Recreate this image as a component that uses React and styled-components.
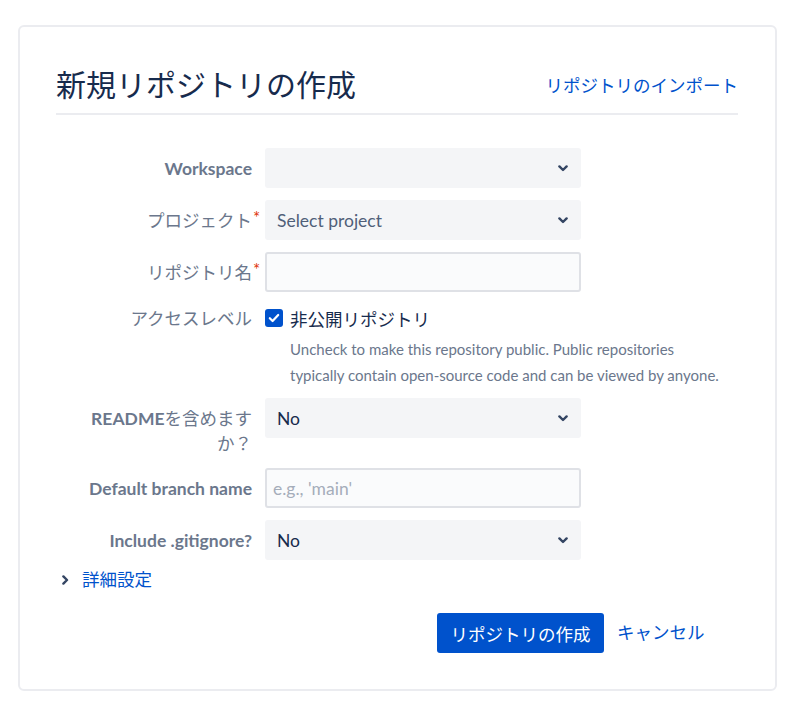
import React from 'react';
import styled, { createGlobalStyle } from 'styled-components';

const Global = createGlobalStyle`
  html, body { margin: 0; padding: 0; background: #fff; }
  body {
    font-family: Lato, "Noto Sans CJK JP", sans-serif;
    color: #172b4d;
    -webkit-font-smoothing: antialiased;
  }
  * { box-sizing: border-box; }
`;

const Page = styled.div`
  padding: 25px 23px 16px 18px;
`;

const Card = styled.section`
  border: 2px solid #ebecf0;
  border-radius: 6px;
  padding: 38px 37px 36px 36px;
`;

const Header = styled.header`
  display: flex;
  justify-content: space-between;
  align-items: center;
  padding-bottom: 12px;
  border-bottom: 2px solid #ebecf0;
`;

const Title = styled.h1`
  margin: 0;
  font-family: "Noto Sans CJK JP", sans-serif;
  font-size: 30px;
  line-height: 36px;
  font-weight: 400;
  color: #172b4d;
`;

const Link = styled.a`
  color: #0052cc;
  text-decoration: none;
  font-size: 17.5px;
  line-height: 24px;
  margin-top: ${(p) => p.$mt || 0}px;
  cursor: pointer;
`;

const Form = styled.form`
  display: flex;
  flex-direction: column;
  gap: 12px;
  margin-top: 33px;
`;

const Row = styled.div`
  display: grid;
  grid-template-columns: 196px 1fr;
  column-gap: 13px;
  align-items: start;
  margin-bottom: ${(p) => p.$mb || 0}px;
`;

const Label = styled.label`
  justify-self: end;
  width: 172px;
  position: relative;
  text-align: right;
  font-size: 17.5px;
  line-height: 25px;
  padding-top: ${(p) => (p.$pt ?? 8)}px;
  font-weight: 700;
  color: #6b778c;
`;

const Jp = styled.span`
  font-weight: 400;
`;

const Required = styled.span`
  position: absolute;
  left: 100%;
  top: 9px;
  margin-left: 1px;
  font-size: 17px;
  line-height: 17px;
  font-weight: 400;
  color: #de350b;
`;

const SelectBox = styled.div`
  width: 316px;
  height: 40px;
  display: flex;
  align-items: center;
  justify-content: space-between;
  padding: 0 13px 0 12px;
  background: #f4f5f7;
  border-radius: 3px;
  font-size: 17.5px;
  color: ${(p) => p.$color || '#172b4d'};
  cursor: pointer;
`;

const TextInput = styled.input`
  width: 316px;
  height: 40px;
  padding: 0 6px;
  border: 2px solid #dfe1e6;
  border-radius: 3px;
  background: #fafbfc;
  font-family: inherit;
  font-size: 17.5px;
  color: #172b4d;
  outline: none;
  &::placeholder { color: #a5adba; }
`;

const AccessField = styled.div`
  display: flex;
  flex-direction: column;
`;

const CheckLine = styled.label`
  display: flex;
  align-items: center;
  gap: 7px;
  height: 28px;
  font-size: 17.5px;
  color: #172b4d;
`;

const CheckBox = styled.span`
  width: 18px;
  height: 18px;
  border-radius: 3px;
  background: #0052cc;
  display: inline-flex;
  align-items: center;
  justify-content: center;
  flex: none;
`;

const Description = styled.p`
  margin: 4px 0 0 25px;
  font-size: 15px;
  line-height: 26px;
  color: #6b778c;
`;

const Advanced = styled.div`
  display: flex;
  align-items: center;
  gap: 13px;
  margin-top: 8px;
  padding-left: 6px;
  height: 24px;
`;

const Buttons = styled.div`
  display: flex;
  align-items: center;
  gap: 13px;
  margin-top: 21px;
  padding-left: 381px;
`;

const Primary = styled.button`
  height: 40px;
  padding: 0 13.5px;
  border: none;
  border-radius: 3px;
  background: #0052cc;
  color: #fff;
  font-family: inherit;
  font-size: 17.5px;
  cursor: pointer;
`;

const ChevronDown = () => (
  <svg width="10" height="7" viewBox="0 0 10 7" aria-hidden="true">
    <path d="M1.4 1.4 L5 5 L8.6 1.4" fill="none" stroke="#344563" strokeWidth="2.4" strokeLinecap="round" strokeLinejoin="round" />
  </svg>
);

const ChevronRight = () => (
  <svg width="7" height="10" viewBox="0 0 7 10" aria-hidden="true">
    <path d="M1.4 1.4 L5 5 L1.4 8.6" fill="none" stroke="#344563" strokeWidth="2.4" strokeLinecap="round" strokeLinejoin="round" />
  </svg>
);

const Check = () => (
  <svg width="12" height="10" viewBox="0 0 12 10" aria-hidden="true">
    <path d="M1.8 5.2 L4.6 8 L10.2 2" fill="none" stroke="#fff" strokeWidth="2.2" strokeLinecap="round" strokeLinejoin="round" />
  </svg>
);

export default function App() {
  return (
    <>
      <Global />
      <Page>
        <Card>
          <Header>
            <Title>新規リポジトリの作成</Title>
            <Link $mt={5}>リポジトリのインポート</Link>
          </Header>
          <Form onSubmit={(e) => e.preventDefault()}>
            <Row>
              <Label>Workspace</Label>
              <SelectBox>
                <span />
                <ChevronDown />
              </SelectBox>
            </Row>
            <Row>
              <Label><Jp>プロジェクト</Jp><Required>*</Required></Label>
              <SelectBox $color="#505f79">
                <span>Select project</span>
                <ChevronDown />
              </SelectBox>
            </Row>
            <Row>
              <Label><Jp>リポジトリ名</Jp><Required>*</Required></Label>
              <TextInput />
            </Row>
            <Row $mb={-2}>
              <Label $pt={2}><Jp>アクセスレベル</Jp></Label>
              <AccessField>
                <CheckLine>
                  <CheckBox><Check /></CheckBox>
                  非公開リポジトリ
                </CheckLine>
                <Description>
                  Uncheck to make this repository public. Public repositories
                  <br />
                  typically contain open-source code and can be viewed by anyone.
                </Description>
              </AccessField>
            </Row>
            <Row>
              <Label>README<Jp>を含めますか？</Jp></Label>
              <SelectBox>
                <span>No</span>
                <ChevronDown />
              </SelectBox>
            </Row>
            <Row>
              <Label>Default branch name</Label>
              <TextInput placeholder="e.g., 'main'" />
            </Row>
            <Row>
              <Label>Include .gitignore?</Label>
              <SelectBox>
                <span>No</span>
                <ChevronDown />
              </SelectBox>
            </Row>
          </Form>
          <Advanced>
            <ChevronRight />
            <Link>詳細設定</Link>
          </Advanced>
          <Buttons>
            <Primary type="button">リポジトリの作成</Primary>
            <Link>キャンセル</Link>
          </Buttons>
        </Card>
      </Page>
    </>
  );
}
